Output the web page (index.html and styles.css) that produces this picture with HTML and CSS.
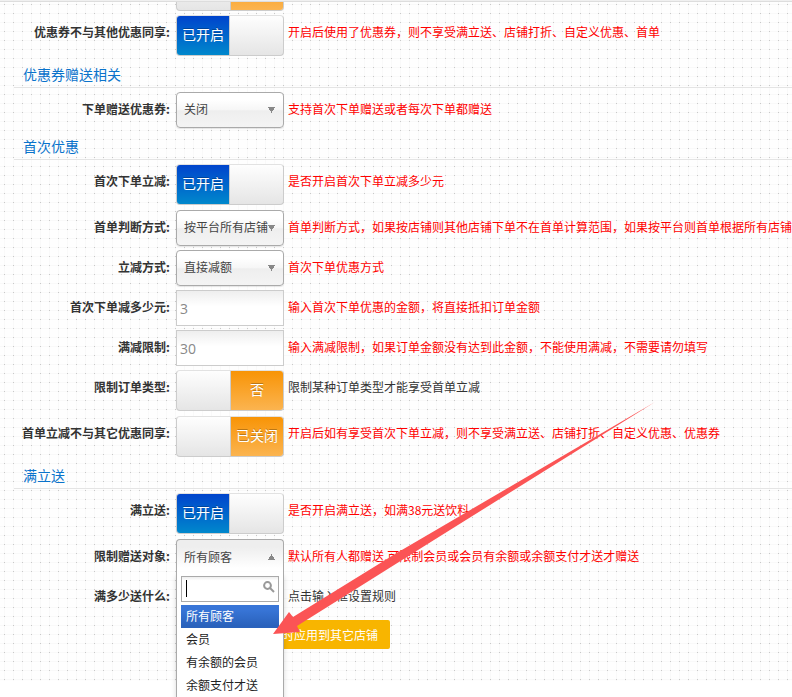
FILE: index.html
```html
<!DOCTYPE html>
<html lang="zh-CN">
<head>
<meta charset="utf-8">
<title>优惠设置</title>
<link rel="stylesheet" href="styles.css">
</head>
<body>
<form class="settings">
  <div class="clipped"><div class="switch switch-off"><span></span></div></div>
  <div class="row row-switch">
    <label class="name" for="s1">优惠券不与其他优惠同享:</label>
    <button type="button" class="switch switch-on" id="s1"><span>已开启</span></button>
    <p class="hint">开启后使用了优惠券，则不享受满立送、店铺打折、自定义优惠、首单</p>
  </div>
  <h2>优惠券赠送相关</h2>
  <div class="row row-field">
    <label class="name" for="d1">下单赠送优惠券:</label>
    <select class="drop" id="d1"><option>关闭</option></select>
    <p class="hint">支持首次下单赠送或者每次下单都赠送</p>
  </div>
  <h2>首次优惠</h2>
  <div class="row row-switch">
    <label class="name" for="s2">首次下单立减:</label>
    <button type="button" class="switch switch-on" id="s2"><span>已开启</span></button>
    <p class="hint">是否开启首次下单立减多少元</p>
  </div>
  <div class="row row-field">
    <label class="name" for="d2">首单判断方式:</label>
    <select class="drop" id="d2"><option>按平台所有店铺</option></select>
    <p class="hint">首单判断方式，如果按店铺则其他店铺下单不在首单计算范围，如果按平台则首单根据所有店铺下</p>
  </div>
  <div class="row row-field">
    <label class="name" for="d3">立减方式:</label>
    <select class="drop" id="d3"><option>直接减额</option></select>
    <p class="hint">首次下单优惠方式</p>
  </div>
  <div class="row row-field">
    <label class="name" for="t1">首次下单减多少元:</label>
    <input class="text" id="t1" type="text" value="3">
    <p class="hint">输入首次下单优惠的金额，将直接抵扣订单金额</p>
  </div>
  <div class="row row-field">
    <label class="name" for="t2">满减限制:</label>
    <input class="text" id="t2" type="text" value="30">
    <p class="hint">输入满减限制，如果订单金额没有达到此金额，不能使用满减，不需要请勿填写</p>
  </div>
  <div class="row row-switch">
    <label class="name" for="s3">限制订单类型:</label>
    <button type="button" class="switch switch-off" id="s3"><span>否</span></button>
    <p class="hint plain">限制某种订单类型才能享受首单立减</p>
  </div>
  <div class="row row-switch">
    <label class="name" for="s4">首单立减不与其它优惠同享:</label>
    <button type="button" class="switch switch-off" id="s4"><span>已关闭</span></button>
    <p class="hint">开启后如有享受首次下单立减，则不享受满立送、店铺打折、自定义优惠、优惠券</p>
  </div>
  <h2>满立送</h2>
  <div class="row row-switch">
    <label class="name" for="s5">满立送:</label>
    <button type="button" class="switch switch-on" id="s5"><span>已开启</span></button>
    <p class="hint">是否开启满立送，如满38元送饮料</p>
  </div>
  <div class="row row-field">
    <label class="name" for="d4">限制赠送对象:</label>
    <div class="picker">
      <button type="button" class="drop drop-open" id="d4" aria-expanded="true">所有顾客</button>
      <div class="menu">
        <div class="search">
          <input type="text" aria-label="搜索">
          <svg viewBox="0 0 12 12" aria-hidden="true"><circle cx="4.5" cy="4.5" r="3.4"/><path d="M7 7l4 4"/></svg>
        </div>
        <ul>
          <li class="active">所有顾客</li>
          <li>会员</li>
          <li>有余额的会员</li>
          <li>余额支付才送</li>
        </ul>
      </div>
      <svg class="arrow" viewBox="0 0 384 236" aria-hidden="true"><path d="M383 0L241 83L123 152L21 215L17 210L1 232L28 230L25 224L154 143L242 88Z"/></svg>
    </div>
    <p class="hint">默认所有人都赠送,可限制会员或会员有余额或余额支付才送才赠送</p>
  </div>
  <div class="row row-field">
    <span class="name">满多少送什么:</span>
    <span class="spacer"></span>
    <p class="hint plain">点击输入框设置规则</p>
  </div>
  <div class="actions"><button type="button" class="apply">时应用到其它店铺</button></div>
</form>
</body>
</html>
```
FILE: styles.css
```css
* { box-sizing: border-box; }
html { background: #fff; }
body {
  margin: 0;
  min-height: 100vh;
  overflow: hidden;
  border-top: 1px solid #f0f0f0;
  color: #333;
  font: 12px/18px "Noto Sans CJK SC", sans-serif;
}
.settings {
  padding: 0 0 32px 14px;
  border-top: 1px solid #ddd;
  background:
    conic-gradient(from 270deg at 1px 1px, #c8c8c8 90deg, transparent 0) 4px 2px / 9px 9px,
    linear-gradient(90deg, #f9f9f9 1px, transparent 0) 4px 2px / 9px 9px,
    linear-gradient(#f9f9f9 1px, #fefefe 0) 4px 2px / 9px 9px;
}
button, input, select { font: inherit; color: inherit; margin: 0; }
.clipped { height: 9px; display: flex; align-items: flex-end; margin-left: 162px; overflow: hidden; }
.row { display: grid; grid-template-columns: 156px 108px 1fr; column-gap: 6px; align-items: start; }
.row-switch { height: 46px; padding-top: 4px; }
.row-field { height: 40px; padding-top: 4px; }
h2 + .row-field { height: 41px; }
.name { padding-top: 8px; text-align: right; font-weight: bold; white-space: nowrap; justify-self: end; }
.hint { margin: 0 0 0 -2px; padding-top: 8px; color: #f00; white-space: nowrap; }
.plain { color: #333; }
h2 {
  margin: 4px 0 0;
  padding: 3px 0 0 9px;
  height: 27px;
  border-bottom: 1px solid #e4e4e4;
  color: #0a73cb;
  font-size: 14px;
  font-weight: normal;
  line-height: 20px;
}
.switch {
  display: flex;
  width: 108px;
  height: 41px;
  flex: none;
  padding: 0;
  overflow: hidden;
  border: 1px solid #ccc;
  border-top-color: #e2e2e2;
  border-radius: 4px;
  background: linear-gradient(#fefefe, #e5e5e5);
  color: #fff;
  font-size: 14px;
  text-shadow: 0 -1px 0 rgba(0, 0, 0, .25);
}
.switch span { display: flex; align-items: center; justify-content: center; width: 53px; height: 39px; padding-bottom: 4px; }
.switch-on span { background: linear-gradient(#04c, #08c); border-right: 1px solid #ccc; }
.switch-off { justify-content: flex-end; }
.switch-off span { background: linear-gradient(#f89406, #fbb450); border-left: 1px solid #ccc; }
.drop {
  width: 108px;
  height: 36px;
  padding: 0 7px 2px;
  appearance: none;
  border: 1px solid #aaa;
  border-radius: 4px;
  background:
    conic-gradient(from -30deg at 50% 0, #888 60deg, transparent 0) 92px 15px / 0 0 no-repeat,
    linear-gradient(#fff 20%, #f6f6f6 50%, #eee 52%, #f4f4f4);
  box-shadow: 0 1px 1px rgba(0, 0, 0, .1);
  color: #444;
  text-align: left;
}
select.drop {
  background:
    conic-gradient(from -32deg at 50% 100%, #888 64deg, transparent 0) 91px 14px / 7px 6px no-repeat,
    linear-gradient(#fff 20%, #f6f6f6 50%, #eee 52%, #f4f4f4);
}
.text {
  width: 108px;
  height: 36px;
  padding: 0 3px;
  border: 1px solid #ccc;
  outline: 0;
  background: linear-gradient(#eee, #fff 45%);
  color: #888;
  font: 14px/20px "Open Sans", "Noto Sans", sans-serif;
}
.picker { position: relative; height: 36px; }
.drop-open {
  border-bottom: 0;
  border-radius: 4px 4px 0 0;
  background:
    conic-gradient(from 148deg at 50% 0, #888 64deg, transparent 0) 91px 14px / 7px 6px no-repeat,
    linear-gradient(#eee 20%, #fff 80%);
  box-shadow: none;
}
.menu {
  position: absolute;
  z-index: 2;
  top: 33px;
  left: 0;
  width: 108px;
  height: 160px;
  padding: 4px;
  border: 1px solid #aaa;
  border-top: 0;
  background: #fff;
  box-shadow: 0 4px 5px rgba(0, 0, 0, .15);
}
.search { position: relative; }
.search input {
  display: block;
  width: 98px;
  height: 26px;
  padding: 2px 18px 2px 5px;
  border: 1px solid #aaa;
  outline: 0;
  background:
    linear-gradient(#000, #000) 4px 3px / 1px 17px no-repeat,
    linear-gradient(#eee, #fff 15%);
}
.search svg { position: absolute; right: 4px; top: 5px; width: 12px; height: 12px; fill: none; stroke: #999; stroke-width: 2; }
.menu ul { margin: 3px 0 0; padding: 0; list-style: none; color: #222; }
.menu li { height: 23px; padding-left: 5px; line-height: 22px; white-space: nowrap; }
.menu .active { background: linear-gradient(#3875d7 20%, #2a62bc 90%); color: #fff; }
.arrow { position: absolute; z-index: 3; left: 96px; top: -137px; width: 384px; height: 236px; fill: #fb5455; pointer-events: none; }
.actions { padding: 5px 0 0 162px; }
.apply {
  display: block;
  width: 214px;
  height: 29px;
  padding: 0 12px;
  border: 0;
  border-radius: 2px;
  background: #f8b500;
  color: #fff;
  text-align: right;
  white-space: nowrap;
}
```
